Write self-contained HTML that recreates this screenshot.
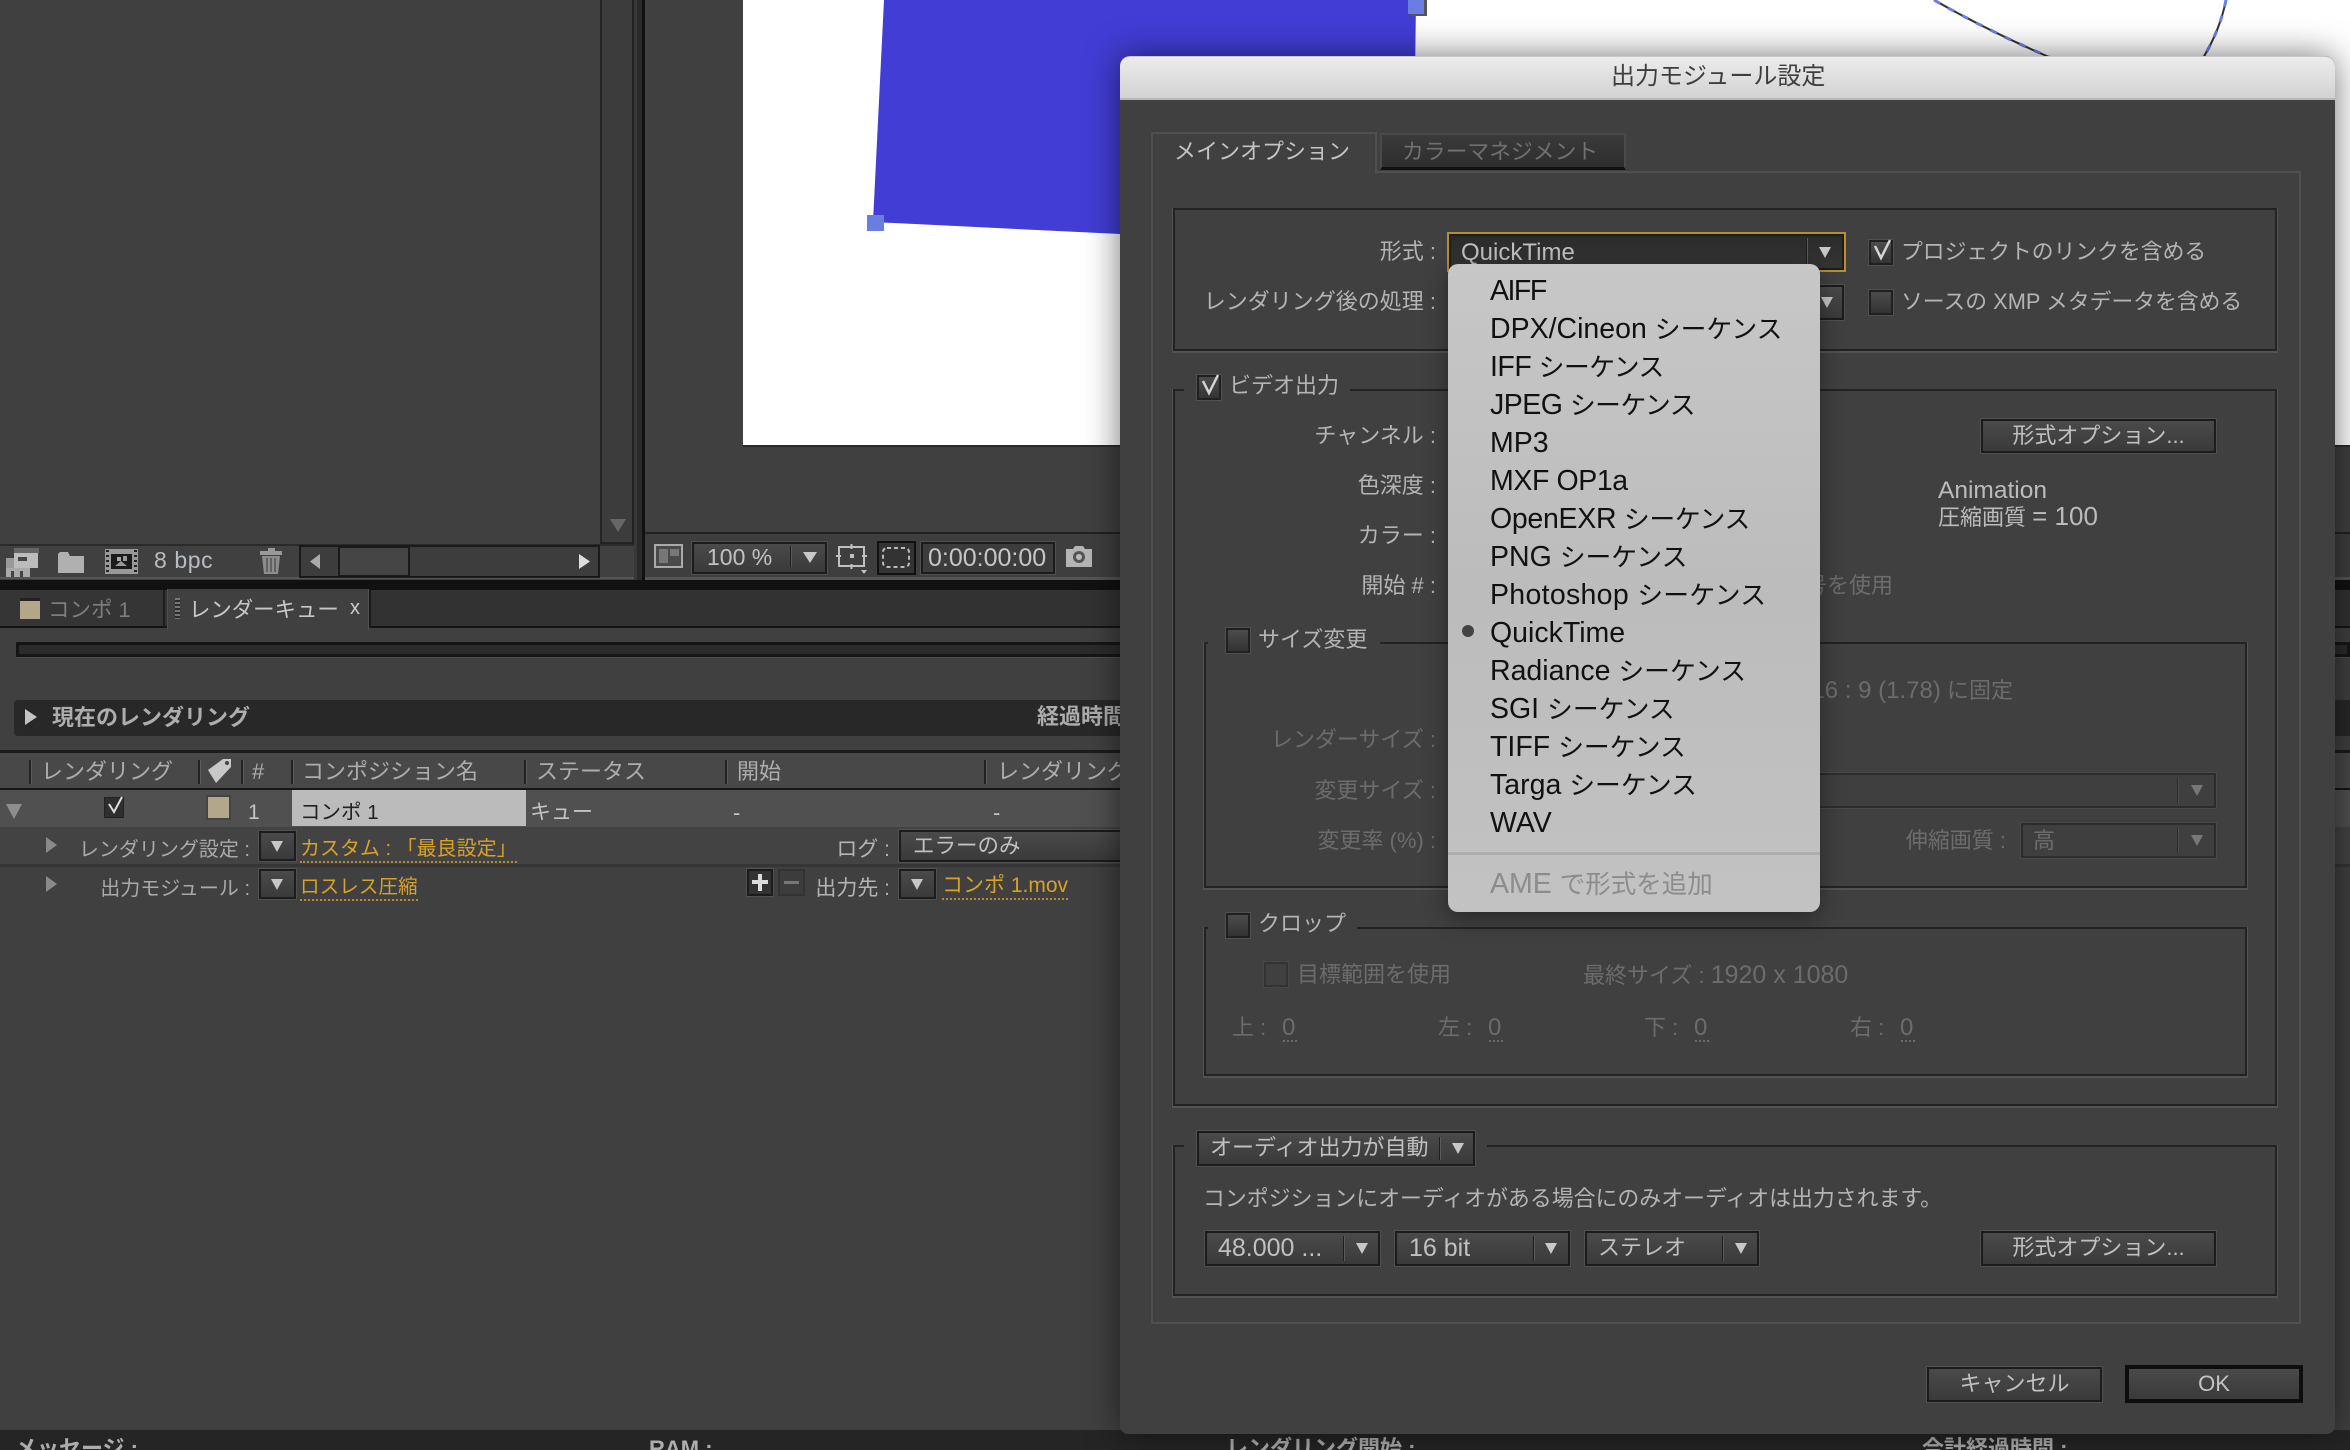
<!DOCTYPE html>
<html lang="ja"><head><meta charset="utf-8"><title>出力モジュール設定</title>
<style>
*{box-sizing:border-box}
html{margin:0;padding:0;background:#404040;width:2350px;height:1450px;overflow:hidden}
body{margin:0;padding:0;background:#404040;position:relative;width:2350px;height:1450px;overflow:hidden;font-family:"Liberation Sans","Noto Sans CJK JP",sans-serif}
div,span.a{position:absolute}
.t{position:absolute;line-height:30px;height:30px;white-space:nowrap;font-size:22px;color:#b4b4b4;margin-top:1px}
.s{font-size:20px}
.r{text-align:right}
.d{color:#6c6c6c}
.b{font-weight:bold;color:#adadad}
.l{font-size:24px}
.x{font-size:25px}
.o{color:#d8a228;border-bottom:2px dotted #b8892a;line-height:24px;height:26px}
.sel{background:linear-gradient(#4a4a4a,#3a3a3a);border:2px solid #1c1c1c;box-shadow:0 0 0 1px #505050}
.sd{background:#3f3f3f;border:2px solid #2c2c2c;box-shadow:0 0 0 1px #4a4a4a}
.cb{width:24px;height:25px;background:linear-gradient(#4c4c4c,#333);border:2px solid #202020;box-shadow:0 0 0 1px #505050}
.cd{background:#404040;border:2px solid #333;box-shadow:0 0 0 1px #484848}
.ar{width:0;height:0;border-left:6px solid transparent;border-right:6px solid transparent;border-top:11px solid #c8c8c8}
.sp{width:1px;background:#1e1e1e;box-shadow:1px 0 0 #5a5a5a}
.g{border:2px solid #232323;box-shadow:0 1px 0 1px #535353}
.bg{background:#404040}
.h{background:#232323;width:2px;height:24px;box-shadow:1px 0 0 #5c5c5c;top:760px}
.m{position:absolute;left:42px;font-size:28.5px;color:#111;line-height:38px;height:38px;white-space:nowrap;margin-top:2px}
.m span{font-size:25.800px}
svg{position:absolute;overflow:visible}
</style></head><body>

<!-- left panels -->
<div style="left:0;top:0;width:601px;height:545px;background:#404040"></div>
<div style="left:600px;top:0;width:34px;height:544px;background:#3c3c3c;border-left:2px solid #252525;border-right:2px solid #222;border-bottom:2px solid #222"></div>
<div class="ar" style="left:610px;top:519px;border-top-color:#666;border-left-width:8px;border-right-width:8px;border-top-width:13px"></div>
<div style="left:634px;top:0;width:11px;height:580px;background:#2a2a2a;border-left:3px solid #383838;border-right:3px solid #111"></div>
<div style="left:645px;top:0;width:1705px;height:532px;background:#404040"></div>
<div style="left:743px;top:0;width:1607px;height:446px;background:#fff"></div>
<div style="left:743px;top:445px;width:1607px;height:2px;background:#2a2a2a"></div>
<svg style="left:0;top:0" width="2350" height="450">
<polygon points="884,0 873,222 1120,234 1413,234 1416,0" fill="#423dd5"/>
<path d="M1934,0 Q1990,32 2056,60" fill="none" stroke="#333" stroke-width="2"/>
<path d="M1934,0 Q1990,32 2056,60" fill="none" stroke="#6a7de0" stroke-width="3" stroke-dasharray="7 9"/>
<path d="M2226,0 Q2220,30 2203,58" fill="none" stroke="#333" stroke-width="2"/>
<path d="M2226,0 Q2220,30 2203,58" fill="none" stroke="#6a7de0" stroke-width="3" stroke-dasharray="7 9"/>
<rect x="1410" y="0" width="17" height="16" fill="#555"/><rect x="1408" y="0" width="16" height="14" fill="#6a7de0"/>
<rect x="867" y="215" width="17" height="16" fill="#6a7de0"/>
</svg>

<!-- toolbars -->
<div style="left:0;top:544px;width:634px;height:35px;background:#404040;border-top:2px solid #2a2a2a;border-bottom:2px solid #555"></div>
<div style="left:645px;top:532px;width:1705px;height:48px;background:#3e3e3e;border-top:2px solid #222;box-shadow:inset 0 -3px 0 #555"></div>
<div style="left:0;top:580px;width:2350px;height:10px;background:#111"></div>

<svg style="left:6px;top:547px" width="34" height="32"><rect x="8" y="1" width="25" height="5" fill="#666"/><rect x="8" y="6" width="24" height="15" fill="#bcbcbc"/><rect x="12" y="10" width="9" height="4" fill="#444"/><rect x="0" y="11" width="8" height="10" fill="#999"/><rect x="0" y="21" width="24" height="9" fill="#aaa"/><rect x="5" y="24" width="3" height="6" fill="#444"/><rect x="14" y="24" width="3" height="6" fill="#444"/></svg>
<svg style="left:57px;top:550px" width="28" height="24"><path d="M1,4 L1,23 L27,23 L27,6 L13,6 L11,2 L3,2 Z" fill="#b0b0b0"/></svg>
<svg style="left:105px;top:548px" width="34" height="28"><rect x="0" y="1" width="33" height="25" fill="#999"/><rect x="6" y="6" width="21" height="15" fill="#1c1c1c"/><rect x="12" y="9" width="4" height="4" fill="#aaa"/><rect x="18" y="8" width="4" height="5" fill="#999"/><path d="M10,18 L16,13 L22,18Z" fill="#999"/><path d="M1,2h3v2h-3zM1,7h3v2h-3zM1,12h3v2h-3zM1,17h3v2h-3zM1,22h3v2h-3zM29,2h3v2h-3zM29,7h3v2h-3zM29,12h3v2h-3zM29,17h3v2h-3zM29,22h3v2h-3z" fill="#222"/></svg>
<div class="t" style="left:154px;top:544px;font-size:23px;color:#b7bcc2;letter-spacing:.6px">8 bpc</div>
<svg style="left:260px;top:548px" width="23" height="27"><rect x="8" y="0" width="7" height="3" fill="#999"/><rect x="0" y="3" width="22" height="4" fill="#999"/><path d="M2,8 H20 L18,26 H4 Z" fill="#8c8c8c"/><path d="M7,10v14M11,10v14M15,10v14" stroke="#555" stroke-width="1.5"/></svg>

<div style="left:299px;top:545px;width:301px;height:33px;background:#3d3d3d;border:2px solid #1a1a1a"></div>
<svg style="left:299px;top:545px" width="300" height="33"><path d="M17,9 L7,16.5 L17,24 Z" transform="translate(4,0)" fill="#aaa"/><path d="M280,9 L291,16.5 L280,24 Z" fill="#ddd"/></svg>
<div style="left:338px;top:546px;width:72px;height:31px;background:#454545;border:2px solid #1a1a1a"></div>

<div style="left:654px;top:544px;width:29px;height:24px;background:#4a4a4a;border:2px solid #aaa"></div>
<div style="left:659px;top:549px;width:9px;height:14px;background:#777"></div><div style="left:670px;top:549px;width:9px;height:7px;background:#777"></div>
<div class="sel" style="left:692px;top:542px;width:135px;height:32px"></div>
<div class="t" style="left:707px;top:541px;font-size:23px;color:#c2c2c2">100 %</div>
<div class="sp" style="left:790px;top:546px;height:21px"></div>
<div class="ar" style="left:803px;top:552px;border-left-width:7px;border-right-width:7px"></div>
<svg style="left:836px;top:544px" width="34" height="30"><rect x="3" y="3" width="25" height="19" fill="none" stroke="#c0c0c0" stroke-width="2"/><path d="M0,12h5M26,12h5M15.500,0v5M15.500,20v5" stroke="#c0c0c0" stroke-width="2"/><rect x="14" y="10" width="4" height="4" fill="#c0c0c0"/><path d="M25,26h6l-3,4z" fill="#c0c0c0"/></svg>
<div style="left:877px;top:541px;width:39px;height:34px;background:#333;border:2px solid #111"></div>
<svg style="left:881px;top:545px" width="30" height="25"><rect x="2" y="3" width="26" height="19" rx="4" fill="none" stroke="#bbb" stroke-width="2" stroke-dasharray="4 3"/></svg>
<div class="sel" style="left:921px;top:542px;width:134px;height:32px;background:#3c3c3c"></div>
<div class="t" style="left:928px;top:542px;font-size:25px;color:#c6c6c6">0:00:00:00</div>
<svg style="left:1065px;top:544px" width="28" height="24"><path d="M1,5H8L10,2H18L20,5H27V23H1Z" fill="#b5b5b5"/><circle cx="14" cy="13" r="6" fill="#555"/><circle cx="14" cy="13" r="3" fill="#bbb"/></svg>

<!-- tabs -->
<div style="left:0;top:590px;width:2350px;height:38px;background:#323232;border-bottom:2px solid #141414"></div>
<div style="left:0;top:590px;width:165px;height:38px;background:#353535;border-right:2px solid #1e1e1e;border-bottom:2px solid #141414"></div>
<div style="left:167px;top:589px;width:202px;height:41px;background:#404040;border-left:1px solid #505050;border-right:1px solid #505050"></div>
<div style="left:369px;top:590px;width:2px;height:38px;background:#1a1a1a"></div>
<div style="left:20px;top:598px;width:20px;height:21px;background:#b2a78a;border-top:3px solid #222"></div>
<div class="t" style="left:48px;top:594px;color:#7e7e7e;font-size:21.500px">コンポ 1</div>
<div style="left:175px;top:598px;width:5px;height:21px;background:repeating-linear-gradient(#777 0 2px,#2a2a2a 2px 4px)"></div>
<div class="t" style="left:189px;top:594px;color:#c8c8c8;font-size:21.400px">レンダーキュー</div>
<div class="t" style="left:350px;top:592px;color:#ccc;font-size:20px">x</div>

<!-- progress + band -->
<div style="left:16px;top:642px;width:2334px;height:15px;background:#2b2b2b;border:3px solid #161616;box-shadow:0 1px 0 #505050"></div>
<div style="left:14px;top:700px;width:2336px;height:36px;background:#282828;border-radius:4px 0 0 4px"></div>
<svg style="left:25px;top:709px" width="13" height="16"><path d="M0,0 L12,8 L0,16Z" fill="#c4c4c4"/></svg>
<div class="t b" style="left:52px;top:702px">現在のレンダリング</div>
<div class="t b" style="left:1037px;top:701px">経過時間</div>

<!-- table -->
<div style="left:0;top:750px;width:2350px;height:40px;background:#484848;border-top:3px solid #1c1c1c;border-bottom:2px solid #161616"></div>
<div class="h" style="left:29px"></div><div class="h" style="left:198px"></div><div class="h" style="left:241px"></div><div class="h" style="left:291px"></div><div class="h" style="left:524px"></div><div class="h" style="left:725px"></div><div class="h" style="left:984px"></div>
<div class="t" style="left:41px;top:756px;color:#adadad">レンダリング</div>
<svg style="left:205px;top:756px" width="30" height="30"><path d="M3,14 L18,3 L26,3 L26,11 L11,27 Z" fill="#c8c8c8"/><circle cx="22" cy="7" r="2" fill="#444"/></svg>
<div class="t" style="left:252px;top:756px;color:#adadad">#</div>
<div class="t" style="left:302px;top:756px;color:#adadad">コンポジション名</div>
<div class="t" style="left:536px;top:756px;color:#adadad">ステータス</div>
<div class="t" style="left:737px;top:756px;color:#adadad">開始</div>
<div class="t" style="left:997px;top:756px;color:#adadad">レンダリング</div>

<div style="left:0;top:790px;width:2350px;height:37px;background:#505050"></div>
<div style="left:292px;top:790px;width:234px;height:36px;background:#bbb"></div>
<svg style="left:5px;top:804px" width="18" height="15"><path d="M1,0 H17 L9,15Z" fill="#8e8e8e"/></svg>
<div style="left:104px;top:797px;width:20px;height:21px;background:#2e2e2e;border:1px solid #222"></div>
<svg style="left:104px;top:795px" width="22" height="22"><path d="M5,9 L10,17 L18,2" fill="none" stroke="#ddd" stroke-width="2"/></svg>
<div style="left:208px;top:797px;width:21px;height:21px;background:#b2a78a;box-shadow:0 0 0 2px #444"></div>
<div class="t" style="left:248px;top:797px;font-size:21px;color:#c4c4c4">1</div>
<div class="t" style="left:300px;top:797px;font-size:20.500px;color:#222">コンポ 1</div>
<div class="t" style="left:530px;top:797px;font-size:21px;color:#c4c4c4">キュー</div>
<div class="t" style="left:733px;top:797px;color:#c4c4c4">-</div>
<div class="t" style="left:993px;top:797px;color:#c4c4c4">-</div>

<div style="left:0;top:827px;width:2350px;height:40px;background:#434343;border-bottom:3px solid #353535"></div>
<svg style="left:46px;top:837px" width="12" height="16"><path d="M0,0 L11,8 L0,16Z" fill="#8a8a8a"/></svg>
<div class="t r s" style="right:2100px;top:834px;color:#aaa">レンダリング設定 :</div>
<div class="sel" style="left:259px;top:831px;width:37px;height:30px"></div><div class="ar" style="left:271px;top:841px"></div>
<div class="t o s" style="left:300px;top:836px">カスタム : 「最良設定」</div>
<div class="t r" style="right:1460px;top:834px;font-size:21px">ログ :</div>
<div class="sel" style="left:899px;top:830px;width:300px;height:32px"></div>
<div class="t" style="left:913px;top:830px;font-size:21.500px;color:#c0c0c0">エラーのみ</div>

<svg style="left:46px;top:876px" width="12" height="16"><path d="M0,0 L11,8 L0,16Z" fill="#8a8a8a"/></svg>
<div class="t r s" style="right:2100px;top:873px;color:#aaa">出力モジュール :</div>
<div class="sel" style="left:259px;top:869px;width:37px;height:30px"></div><div class="ar" style="left:271px;top:879px"></div>
<div class="t o s" style="left:300px;top:874px;font-size:19.600px">ロスレス圧縮</div>
<div class="sel" style="left:747px;top:869px;width:26px;height:27px;background:#333"></div>
<svg style="left:747px;top:869px" width="26" height="27"><path d="M13,5v17M5,13h16" stroke="#ddd" stroke-width="4"/></svg>
<div style="left:778px;top:869px;width:27px;height:27px;background:#3c3c3c;border:2px solid #333"></div>
<div style="left:784px;top:881px;width:15px;height:3px;background:#777"></div>
<div class="t r" style="right:1460px;top:873px;font-size:21px">出力先 :</div>
<div class="sel" style="left:899px;top:869px;width:37px;height:30px"></div><div class="ar" style="left:911px;top:879px"></div>
<div class="t o" style="left:942px;top:873px;font-size:21px">コンポ 1.mov</div>

<!-- footer -->
<div style="left:0;top:1430px;width:2350px;height:20px;background:#252525"></div>
<div class="t b" style="left:15px;top:1433px">メッセージ :</div>
<div class="t b" style="left:649px;top:1433px">RAM :</div>
<div class="t b" style="left:1226px;top:1433px">レンダリング開始 :</div>
<div class="t b" style="left:1922px;top:1433px">合計経過時間 :</div>

<!-- dialog -->
<div style="left:1120px;top:56px;width:1215px;height:1378px;background:#404040;border-radius:10px 10px 8px 8px;box-shadow:0 0 34px rgba(0,0,0,.55)"></div>
<div style="left:1120px;top:56px;width:1215px;height:44px;background:linear-gradient(#ececec,#d2d2d2);border-radius:10px 10px 0 0;border-top:1px solid #c8c8c8;border-bottom:2px solid #b8b8b8"></div>
<div class="t" style="left:1611px;top:61px;color:#3e3e3e;font-size:24px">出力モジュール設定</div>

<div style="left:1151px;top:171px;width:1150px;height:1153px;border:2px solid #505050"></div>
<div style="left:1151px;top:132px;width:226px;height:42px;background:#404040;border:2px solid #505050;border-bottom:none"></div>
<div class="t" style="left:1174px;top:136px;color:#c4c4c4">メインオプション</div>
<div style="left:1380px;top:133px;width:246px;height:37px;background:linear-gradient(#3a3a3a,#2e2e2e);border:2px solid #4a4a4a;border-bottom:3px solid #111"></div>
<div class="t" style="left:1402px;top:136px;color:#707070;font-size:21.800px">カラーマネジメント</div>

<div class="g" style="left:1173px;top:208px;width:1104px;height:143px"></div>
<div class="t r" style="right:914px;top:236px">形式 :</div>
<div class="t r" style="right:914px;top:286px">レンダリング後の処理 :</div>
<div style="left:1447px;top:232px;width:399px;height:40px;background:linear-gradient(#2a2a2a,#363636);border:2px solid #b88f2e;box-shadow:inset 0 0 0 2px #1c1c1c"></div>
<div class="t l" style="left:1461px;top:237px;color:#c0c0c0">QuickTime</div>
<div class="sp" style="left:1806px;top:238px;height:28px"></div>
<div class="ar" style="left:1819px;top:247px"></div>
<div class="sel" style="left:1700px;top:285px;width:144px;height:35px"></div>
<div class="ar" style="left:1821px;top:297px"></div>
<div class="cb" style="left:1869px;top:240px"></div>
<svg style="left:1869px;top:236px" width="26" height="26"><path d="M6,10 L12,22 L21,4" fill="none" stroke="#d4d4d4" stroke-width="2.500"/></svg>
<div class="t" style="left:1901px;top:236px;font-size:21.800px">プロジェクトのリンクを含める</div>
<div class="cb" style="left:1869px;top:290px"></div>
<div class="t" style="left:1901px;top:286px;font-size:21.800px">ソースの XMP メタデータを含める</div>

<div class="g" style="left:1173px;top:389px;width:1104px;height:717px"></div>
<div class="bg" style="left:1184px;top:380px;width:166px;height:20px"></div>
<div class="cb" style="left:1197px;top:375px"></div>
<svg style="left:1197px;top:371px" width="26" height="26"><path d="M6,10 L12,22 L21,4" fill="none" stroke="#d4d4d4" stroke-width="2.500"/></svg>
<div class="t" style="left:1229px;top:370px">ビデオ出力</div>
<div class="t r" style="right:914px;top:420px">チャンネル :</div>
<div class="t r" style="right:914px;top:470px">色深度 :</div>
<div class="t r" style="right:914px;top:520px">カラー :</div>
<div class="t r" style="right:914px;top:570px">開始 # :</div>
<div class="sel" style="left:1981px;top:419px;width:235px;height:34px"></div>
<div class="t" style="left:1981px;width:235px;text-align:center;top:420px;color:#c0c0c0">形式オプション...</div>
<div class="t x" style="left:1938px;top:475px;color:#bcbcbc;font-size:24.500px">Animation</div>
<div class="t" style="left:1938px;top:500px;color:#bcbcbc">圧縮画質 <span class="x" style="font-size:26px">= 100</span></div>
<div class="t r d" style="right:457px;top:570px">コンポジションのフレーム番号を使用</div>

<div class="g" style="left:1204px;top:642px;width:1043px;height:246px"></div>
<div class="bg" style="left:1208px;top:632px;width:172px;height:20px"></div>
<div class="cb" style="left:1226px;top:628px"></div>
<div class="t" style="left:1258px;top:624px">サイズ変更</div>
<div class="t r d" style="right:914px;top:724px">レンダーサイズ :</div>
<div class="t r d" style="right:914px;top:775px">変更サイズ :</div>
<div class="t r d" style="right:914px;top:825px">変更率 (%) :</div>
<div class="t r d" style="right:337px;top:675px">縦横比を <span class="l">16 : 9 (1.78)</span> に固定</div>
<div class="sd" style="left:1700px;top:773px;width:516px;height:35px"></div>
<div class="sp" style="left:2177px;top:778px;height:25px;background:#2c2c2c;box-shadow:1px 0 0 #4c4c4c"></div>
<div class="ar" style="left:2191px;top:785px;border-top-color:#777"></div>
<div class="t r d" style="right:344px;top:825px">伸縮画質 :</div>
<div class="sd" style="left:2021px;top:823px;width:195px;height:35px"></div>
<div class="t d" style="left:2033px;top:825px">高</div>
<div class="sp" style="left:2177px;top:828px;height:25px;background:#2c2c2c;box-shadow:1px 0 0 #4c4c4c"></div>
<div class="ar" style="left:2191px;top:835px;border-top-color:#777"></div>

<div class="g" style="left:1204px;top:927px;width:1043px;height:149px"></div>
<div class="bg" style="left:1208px;top:918px;width:149px;height:18px"></div>
<div class="cb" style="left:1226px;top:913px"></div>
<div class="t" style="left:1258px;top:908px">クロップ</div>
<div class="cb cd" style="left:1264px;top:962px"></div>
<div class="t d" style="left:1297px;top:959px">目標範囲を使用</div>
<div class="t d" style="left:1583px;top:959px">最終サイズ : <span class="x">1920 x 1080</span></div>
<div class="t d" style="left:1232px;top:1012px">上 :</div><div class="t d l" style="left:1282px;top:1012px">0</div><div style="left:1283px;top:1040px;width:14px;border-top:2px dotted #6c6c6c"></div>
<div class="t d" style="left:1438px;top:1012px">左 :</div><div class="t d l" style="left:1488px;top:1012px">0</div><div style="left:1489px;top:1040px;width:14px;border-top:2px dotted #6c6c6c"></div>
<div class="t d" style="left:1644px;top:1012px">下 :</div><div class="t d l" style="left:1694px;top:1012px">0</div><div style="left:1695px;top:1040px;width:14px;border-top:2px dotted #6c6c6c"></div>
<div class="t d" style="left:1850px;top:1012px">右 :</div><div class="t d l" style="left:1900px;top:1012px">0</div><div style="left:1901px;top:1040px;width:14px;border-top:2px dotted #6c6c6c"></div>

<div class="g" style="left:1173px;top:1145px;width:1104px;height:151px"></div>
<div class="bg" style="left:1184px;top:1135px;width:303px;height:20px"></div>
<div class="sel" style="left:1197px;top:1131px;width:278px;height:35px"></div>
<div class="t" style="left:1210px;top:1132px;color:#c0c0c0">オーディオ出力が自動</div>
<div class="sp" style="left:1439px;top:1137px;height:23px"></div><div class="ar" style="left:1452px;top:1143px"></div>
<div class="t" style="left:1203px;top:1183px;font-size:21.900px">コンポジションにオーディオがある場合にのみオーディオは出力されます。</div>
<div class="sel" style="left:1205px;top:1231px;width:175px;height:35px"></div>
<div class="t" style="left:1218px;top:1232px;font-size:25px;color:#c0c0c0">48.000 ...</div>
<div class="sp" style="left:1343px;top:1236px;height:25px"></div><div class="ar" style="left:1356px;top:1243px"></div>
<div class="sel" style="left:1395px;top:1231px;width:175px;height:35px"></div>
<div class="t" style="left:1409px;top:1232px;font-size:25px;color:#c0c0c0">16 bit</div>
<div class="sp" style="left:1533px;top:1236px;height:25px"></div><div class="ar" style="left:1545px;top:1243px"></div>
<div class="sel" style="left:1585px;top:1231px;width:174px;height:35px"></div>
<div class="t" style="left:1598px;top:1232px;color:#c0c0c0">ステレオ</div>
<div class="sp" style="left:1722px;top:1236px;height:25px"></div><div class="ar" style="left:1735px;top:1243px"></div>
<div class="sel" style="left:1981px;top:1231px;width:235px;height:35px"></div>
<div class="t" style="left:1981px;width:235px;text-align:center;top:1232px;color:#c0c0c0">形式オプション...</div>

<div class="sel" style="left:1927px;top:1367px;width:175px;height:35px"></div>
<div class="t" style="left:1927px;width:175px;text-align:center;top:1368px;color:#c0c0c0">キャンセル</div>
<div class="sel" style="left:2125px;top:1365px;width:178px;height:38px;border:4px solid #0e0e0e;box-shadow:none"></div>
<div class="t" style="left:2125px;width:178px;text-align:center;top:1368px;color:#c4c4c4">OK</div>

<!-- dropdown menu -->
<div style="left:1448px;top:264px;width:372px;height:648px;background:linear-gradient(#c7c7c7,#bcbcbc 50%,#c2c2c2);border-radius:10px;box-shadow:0 6px 24px rgba(0,0,0,.4)">
<div class="m" style="top:6px;letter-spacing:-1.5px">AIFF</div>
<div class="m" style="top:44px">DPX/Cineon <span>シーケンス</span></div>
<div class="m" style="top:82px;letter-spacing:-.5px">IFF <span>シーケンス</span></div>
<div class="m" style="top:120px;letter-spacing:-.5px">JPEG <span>シーケンス</span></div>
<div class="m" style="top:158px">MP3</div>
<div class="m" style="top:196px;letter-spacing:-.4px">MXF OP1a</div>
<div class="m" style="top:234px;letter-spacing:-.3px">OpenEXR <span>シーケンス</span></div>
<div class="m" style="top:272px">PNG <span>シーケンス</span></div>
<div class="m" style="top:310px;letter-spacing:.3px">Photoshop <span>シーケンス</span></div>
<div style="left:14px;top:361px;width:12px;height:12px;border-radius:50%;background:#444"></div>
<div class="m" style="top:348px">QuickTime</div>
<div class="m" style="top:386px">Radiance <span>シーケンス</span></div>
<div class="m" style="top:424px">SGI <span>シーケンス</span></div>
<div class="m" style="top:462px">TIFF <span>シーケンス</span></div>
<div class="m" style="top:500px">Targa <span>シーケンス</span></div>
<div class="m" style="top:538px">WAV</div>
<div style="left:0;top:588px;width:372px;height:3px;background:#adadad"></div>
<div class="m" style="top:599px;color:#8c8c8c">AME <span style="font-size:25.500px">で形式を追加</span></div>
</div>
</body></html>
